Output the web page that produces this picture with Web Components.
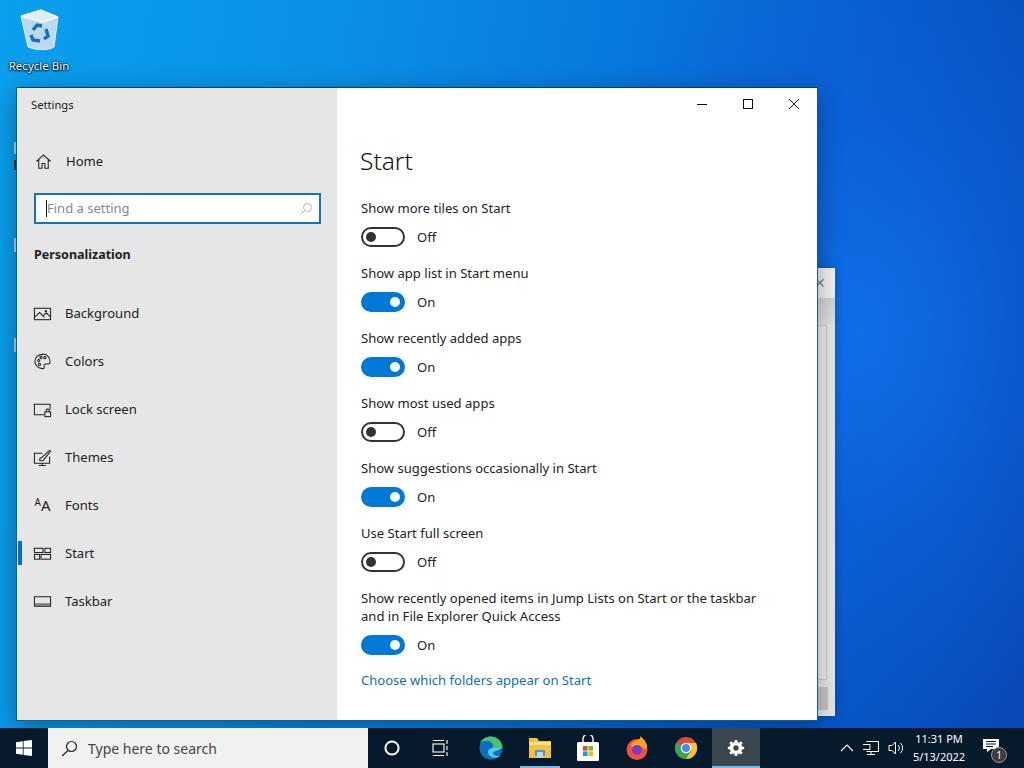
<!DOCTYPE html>
<html>
<head>
<meta charset="utf-8">
<title>Settings - Start</title>
<style>
    html, body { margin: 0; height: 100%; overflow: hidden; }
    body { font-family: "Noto Sans", "Open Sans", sans-serif; }
</style>
</head>
<body>
<x-desktop>
    <x-settings-window>
        <x-nav-item slot="nav" icon="background" label="Background"></x-nav-item>
        <x-nav-item slot="nav" icon="colors" label="Colors"></x-nav-item>
        <x-nav-item slot="nav" icon="lock" label="Lock screen"></x-nav-item>
        <x-nav-item slot="nav" icon="themes" label="Themes"></x-nav-item>
        <x-nav-item slot="nav" icon="fonts" label="Fonts"></x-nav-item>
        <x-nav-item slot="nav" icon="start" label="Start" active></x-nav-item>
        <x-nav-item slot="nav" icon="taskbar" label="Taskbar"></x-nav-item>
        <x-toggle-row label="Show more tiles on Start"></x-toggle-row>
        <x-toggle-row label="Show app list in Start menu" on></x-toggle-row>
        <x-toggle-row label="Show recently added apps" on></x-toggle-row>
        <x-toggle-row label="Show most used apps"></x-toggle-row>
        <x-toggle-row label="Show suggestions occasionally in Start" on></x-toggle-row>
        <x-toggle-row label="Use Start full screen"></x-toggle-row>
        <x-toggle-row label="Show recently opened items in Jump Lists on Start or the taskbar and in File Explorer Quick Access" on></x-toggle-row>
    </x-settings-window>
</x-desktop>
<x-taskbar></x-taskbar>

<script>
{
    const icons = {
        home: '<path d="M2.5 10 10 3l7.5 7M5 8v9h3.5v-5h3v5H15V8"/>',
        background: '<rect x="1.5" y="4.5" width="17" height="12"/><path d="M1.5 14 7 9l5 5M11 12l3-2.500 4.500 4"/><circle cx="13.5" cy="7.5" r=".7"/>',
        colors: '<path d="M10 2.5c-4.600 0-8 3-8 7.200 0 4.400 3.600 7.800 8 7.800 1.700 0 2.200-1 1.700-2.200-.6-1.600.2-2.600 1.800-2.600h2.600c1.200 0 1.900-1 1.900-2.600 0-4.400-3.700-8-8-8Z"/><circle cx="6" cy="9" r="1.2"/><circle cx="8.5" cy="5.8" r="1.2"/><circle cx="12.5" cy="6" r="1.2"/><circle cx="6.8" cy="13" r="1.2"/>',
        lock: '<path d="M12 15.5H1.5v-11h16.500v5.500"/><rect x="12.5" y="12.5" width="6" height="5"/><path d="M13.8 12.5v-1.200a1.700 1.700 0 0 1 3.400 0v1.200"/>',
        themes: '<path d="M10 5.5H1.5v10.500h16v-7M9.500 16v2.500M6 18.500h7.500"/><path d="M7 13c0-2 1-3 2.400-3L17.500 2.500l1 1-6.800 8.400c0 1.400-2 2-4.700 1.100Z"/>',
        start: '<rect x="1.5" y="4.5" width="9" height="4.5"/><rect x="12.5" y="4.5" width="6" height="4.5"/><rect x="1.5" y="11" width="5.5" height="5"/><rect x="8.5" y="11" width="10" height="5"/>',
        taskbar: '<rect x="1.5" y="5" width="17" height="10"/><path d="M2 13.2h16" stroke="#777" stroke-width="2.6"/>'
    };

    window.customElements.define('x-desktop', class extends HTMLElement {
        constructor() {
            super();
            this.attachShadow({ mode: 'open' }).innerHTML = `
                <style>
                    :host {
                        display: block; position: absolute; inset: 0 0 40px 0; overflow: hidden;
                        background:
                            radial-gradient(ellipse 300px 420px at 860px 330px, #0f6fe8 0%, rgba(15,100,225,.55) 50%, rgba(10,80,200,0) 100%),
                            linear-gradient(100deg, #0aa0ee 0%, #0a90e6 30%, #0878de 55%, #0658c8 80%, #0a48b6 100%);
                    }
                    .bin {
                        position: absolute; left: 3px; top: 8px; width: 72px; display: flex; flex-direction: column;
                        align-items: center; color: #fff; font-size: 11.5px; gap: 6px; line-height: 15px;
                        text-shadow: 0 1px 2px #000, 0 0 2px #000, 0 0 1px #000;
                    }
                    .back {
                        position: absolute; left: 780px; top: 268px; width: 55px; height: 448px; box-sizing: border-box;
                        background: #e9e9e9; box-shadow: 0 0 8px rgba(0,0,0,.2);
                        color: #888; font: 14px "Noto Sans", sans-serif;
                    }
                    .back .head { height: 30px; background: #f3f3f3; text-align: right; padding: 0 9px 0 0; line-height: 30px; }
                    .back .inner { position: absolute; left: 0; right: 8px; top: 57px; height: 353px; border: 1px solid #cfcfcf; background: #f0f0f0; }
                    .back .btn { position: absolute; right: 7px; bottom: 6px; width: 40px; height: 23px; background: #c8c8c8; }
                    .back .band { height: 27px; background: linear-gradient(#d4d4d4, #e4e4e4); }
                    .stub { position: absolute; left: 14px; width: 3px; background: #d5e6f2; opacity: .75; }
                </style>
                <div class="bin">
                    <svg width="40" height="44" viewBox="0 0 40 44">
                        <path d="M2 8 22 2l17 7-4 30c-4 3-17 4-26 0Z" fill="#b9d9ec" stroke="#e6f1f8"/>
                        <path d="M2 8 22 2l17 7-14 5Z" fill="#dcedf7" stroke="#fff"/>
                        <path d="M4 9 25 14l14-5" fill="none" stroke="#fff"/>
                        <path d="M14 22l4-5 5 1M27 21l2 7-4 3M21 33l-7-1-2-5" fill="none" stroke="#1c6cc0" stroke-width="3.4"/>
                    </svg>
                    <span>Recycle Bin</span>
                </div>
                <div class="stub" style="top:142px;height:12px"></div>
                <div class="stub" style="top:160px;height:10px;background:#1a3a5a;opacity:1"></div>
                <div class="stub" style="top:238px;height:14px"></div>
                <div class="stub" style="top:338px;height:14px"></div>
                <div class="back"><div class="head">✕</div><div class="band"></div><div class="inner"></div><div class="btn"></div></div>
                <slot></slot>
            `;
        }
    });

    window.customElements.define('x-settings-window', class extends HTMLElement {
        constructor() {
            super();
            const svg = (d, w = 19) => `<svg width="${w}" height="${w}" viewBox="0 0 20 20" fill="none" stroke="#222" stroke-width="1.1">${d}</svg>`;
            this.attachShadow({ mode: 'open' }).innerHTML = `
                <style>
                    :host {
                        position: absolute; left: 16px; top: 87px; width: 802px; height: 634px; box-sizing: border-box;
                        display: grid; grid-template-columns: 320px 1fr; border: 1px solid #0b5f9a;
                        border-top-color: #0a3f70; background: #fff; color: #1a1a1a;
                        box-shadow: 0 6px 24px rgba(0,0,0,.35); font-size: 13.05px;
                    }
                    aside { background: #e6e6e6; display: flex; flex-direction: column; }
                    .title { font-size: 11.2px; padding: 8px 0 0 14px; height: 36px; box-sizing: border-box; line-height: 17px; }
                    .home { display: flex; align-items: center; margin-top: 25px; padding-left: 17px; height: 24px; gap: 13px; }
                    .search {
                        margin: 20px 16px 0 17px; height: 31px; box-sizing: border-box; border: 2px solid #1173bb; background: #fff;
                        display: flex; align-items: center; padding: 0 6px 0 10px; color: #8a8a8a; font-size: 13px; justify-content: space-between;
                    }
                    .search span { border-left: 1px solid #111; line-height: 17px; }
                    h2 { margin: 21px 0 0 17px; font-size: 12.5px; font-weight: 700; color: #222; line-height: 20px; }
                    nav { margin-top: 24px; display: flex; flex-direction: column; }
                    main { position: relative; padding: 56px 20px 0 24px; display: flex; flex-direction: column; }
                    h1 { font-size: 24.5px; font-weight: 300; margin: 0 0 21px -1px; line-height: 34px; color: #111; }
                    .rows { display: flex; flex-direction: column; gap: 17px; }
                    a { color: #0f6cbd; text-decoration: none; margin-top: 15px; line-height: 20px; }
                    .caption { position: absolute; right: 0; top: 0; display: flex; }
                    .caption div { width: 46px; height: 32px; display: flex; align-items: center; justify-content: center; }
                </style>
                <aside>
                    <div class="title">Settings</div>
                    <div class="home">${svg(icons.home)}<span>Home</span></div>
                    <div class="search"><span>Find a setting</span>
                        <svg width="14" height="14" viewBox="0 0 14 14" fill="none" stroke="#b5b5b5"><circle cx="8.5" cy="5.5" r="4"/><path d="M5.5 8.5 1.5 12.5"/></svg>
                    </div>
                    <h2>Personalization</h2>
                    <nav><slot name="nav"></slot></nav>
                </aside>
                <main>
                    <div class="caption">
                        <div><svg width="12" height="12" stroke="#111"><path d="M1 6.5h10"/></svg></div>
                        <div><svg width="12" height="12" fill="none" stroke="#111"><rect x="1.5" y="1.5" width="9" height="9"/></svg></div>
                        <div><svg width="12" height="12" fill="none" stroke="#111"><path d="M1 1l10 10M11 1 1 11"/></svg></div>
                    </div>
                    <h1>Start</h1>
                    <div class="rows"><slot></slot></div>
                    <a>Choose which folders appear on Start</a>
                </main>
            `;
        }
    });

    window.customElements.define('x-nav-item', class extends HTMLElement {
        constructor() {
            super();
            const name = this.getAttribute('icon');
            const glyph = name === 'fonts'
                ? '<span class="aa"><small>A</small>A</span>'
                : `<svg width="19" height="19" viewBox="0 0 20 20" fill="none" stroke="#222" stroke-width="1.1">${icons[name]}</svg>`;
            this.attachShadow({ mode: 'open' }).innerHTML = `
                <style>
                    :host { display: block; height: 48px; font-size: 13.05px; color: #222; }
                    .row { height: 48px; display: flex; align-items: center; padding-left: 16px; gap: 13px; position: relative; }
                    :host([active]) .row::before { content: ""; position: absolute; left: 1px; top: 12px; width: 4px; height: 24px; background: #0f6cbd; }
                    .aa { width: 19px; font-size: 15px; text-align: center; line-height: 1; white-space: nowrap; }
                    .aa small { font-size: 10px; vertical-align: 5px; }
                </style>
                <div class="row">${glyph}<span>${this.getAttribute('label')}</span></div>
            `;
        }
    });

    window.customElements.define('x-toggle-row', class extends HTMLElement {
        constructor() {
            super();
            const on = this.hasAttribute('on');
            this.attachShadow({ mode: 'open' }).innerHTML = `
                <style>
                    :host { display: block; font-size: 13.05px; color: #222; }
                    .label { line-height: 18px; width: 410px; }
                    .line { display: flex; align-items: center; gap: 12px; margin-top: 10px; height: 20px; }
                    .track {
                        width: 44px; height: 20px; box-sizing: border-box; border-radius: 10px; position: relative;
                        border: 2px solid ${on ? '#0078d7' : '#333'}; background: ${on ? '#0078d7' : 'transparent'};
                    }
                    .knob {
                        position: absolute; top: 3px; ${on ? 'right: 3px' : 'left: 3px'}; width: 10px; height: 10px; border-radius: 50%;
                        background: ${on ? '#fff' : '#333'};
                    }
                </style>
                <div class="label">${this.getAttribute('label')}</div>
                <div class="line"><div class="track"><div class="knob"></div></div><span>${on ? 'On' : 'Off'}</span></div>
            `;
        }
    });

    window.customElements.define('x-taskbar', class extends HTMLElement {
        constructor() {
            super();
            this.attachShadow({ mode: 'open' }).innerHTML = `
                <style>
                    :host {
                        position: absolute; left: 0; right: 0; bottom: 0; height: 40px; display: flex; align-items: stretch;
                        background: #071a2c; color: #fff; font-size: 11px;
                    }
                    .start { width: 48px; display: flex; align-items: center; justify-content: center; }
                    .search {
                        width: 320px; background: #f1f1f1; color: #444; display: flex; align-items: center; gap: 10px;
                        padding-left: 13px; box-sizing: border-box; font-size: 14px;
                    }
                    .slot { width: 48px; display: flex; align-items: center; justify-content: center; position: relative; }
                    .slot.run::after { content: ""; position: absolute; left: 4px; right: 4px; bottom: 0; height: 2px; background: #76b9ed; }
                    .slot.active { background: #3a4650; }
                    .slot.active::after { left: 0; right: 0; }
                    .tray { margin-left: auto; display: flex; align-items: center; padding-right: 13px; }
                    .tray svg { display: block; }
                    .clock { text-align: center; line-height: 18px; width: 62px; margin: 0 1px 0 3px; }
                    .notify { width: 40px; height: 40px; position: relative; display: flex; align-items: center; justify-content: center; }
                    .notify svg { margin-top: -5px; }
                    .badge {
                        position: absolute; left: 20px; top: 19px; width: 16px; height: 16px; border-radius: 50%; background: #3c3c3c;
                        border: 1px solid #999; box-sizing: border-box; font-size: 10px; line-height: 14px; text-align: center;
                    }
                </style>
                <div class="start"><svg width="16" height="16" viewBox="0 0 16 16" fill="#fff"><path d="M0 2.2 6.8 1.2v6.400H0ZM7.600 1.100 16 0v7.600H7.600ZM0 8.400h6.800v6.400L0 13.800ZM7.600 8.400H16V16l-8.400-1.100Z"/></svg></div>
                <div class="search">
                    <svg width="17" height="17" viewBox="0 0 17 17" fill="none" stroke="#222" stroke-width="1.2"><circle cx="10.5" cy="6.5" r="5"/><path d="M7 10.5 1 16"/></svg>
                    <span>Type here to search</span>
                </div>
                <div class="slot"><svg width="16" height="16" fill="none" stroke="#fff" stroke-width="2"><circle cx="8" cy="8" r="6.6"/></svg></div>
                <div class="slot"><svg width="18" height="18" viewBox="0 0 18 18" fill="none" stroke="#fff" stroke-width="1.1"><path d="M2 1.5h11M2 16.5h11"/><rect x="2" y="5" width="11" height="8"/><path d="M16 1v4M16 7v4M16 13v4"/></svg></div>
                <div class="slot" style="margin-left:3px"><svg width="24" height="24" viewBox="0 0 24 24"><circle cx="12" cy="12" r="11.5" fill="#0c6fc2"/><path d="M23.5 12C23 5 18 .5 12 .5 7 .5 3 3 1 7c3-2.500 9-3.500 12 0 1.500 1.700 1.500 3.500.5 5h10Z" fill="#4cc46c"/><path d="M14 12c-3 0-5 1.500-5 4 0 3 3 5.500 7 5.500 2 0 3.500-.6 5-1.600-3 .6-7-.5-7-3 0-1.500 4-2 9.500-4.900Z" fill="#56c9ee"/></svg></div>
                <div class="slot run" style="margin-left:1px"><svg width="24" height="22" viewBox="0 0 24 22"><path d="M1 1h8l2 3h12v17H1Z" fill="#f4c13f"/><path d="M1 5h22v3H1Z" fill="#fbe08a"/><path d="M7 13h10v6H7Z" fill="#4a94d0"/><path d="M9 15h6v6H9Z" fill="#c4d8e6"/></svg></div>
                <div class="slot"><svg width="24" height="26" viewBox="0 0 24 26"><path d="M7 7V4a5 5 0 0 1 10 0v3" fill="none" stroke="#eee" stroke-width="1.5"/><rect x="1" y="7" width="22" height="19" rx="1.5" fill="#fff"/><rect x="7" y="11" width="4.6" height="4.6" fill="#e8452c"/><rect x="12.4" y="11" width="4.6" height="4.6" fill="#7dbb2c"/><rect x="7" y="16.4" width="4.6" height="4.6" fill="#11a0ea"/><rect x="12.4" y="16.4" width="4.6" height="4.6" fill="#f9b90e"/></svg></div>
                <div class="slot" style="margin-left:1px"><svg width="24" height="24" viewBox="0 0 24 24"><circle cx="12" cy="13.5" r="10.5" fill="#f0503c"/><path d="M22 9C20 3 16 1 15 0c1 3-2 4-5 5-3 1-5 4-3 7 2-3 8-3 11 0 2 2 5 1 4-3Z" fill="#ffa020"/><circle cx="12" cy="14" r="5" fill="#7a3bc8"/></svg></div>
                <div class="slot" style="margin-left:1px"><svg width="24" height="24" viewBox="0 0 24 24"><circle cx="12" cy="12" r="11" fill="#dd4a3c"/><path d="M12 12 2.500 6.500A11 11 0 0 0 12 23l5-8Z" fill="#3aa655"/><path d="M12 7h10a11 11 0 0 1-10 16l5-8Z" fill="#f7c72c"/><circle cx="12" cy="12" r="5.2" fill="#fff"/><circle cx="12" cy="12" r="4" fill="#4a8ae8"/></svg></div>
                <div class="slot run active" style="margin-left:2px"><svg width="18" height="18" viewBox="0 0 20 20"><path d="M10 3a7 7 0 1 0 0 14 7 7 0 0 0 0-14Zm0 4a3 3 0 1 1 0 6 3 3 0 0 1 0-6Z" fill="#fff" fill-rule="evenodd"/><path d="M10 1v4M10 15v4M1 10h4M15 10h4M3.600 3.600l3 3M13.400 13.400l3 3M16.400 3.600l-3 3M6.600 13.400l-3 3" stroke="#fff" stroke-width="3"/></svg></div>
                <div class="tray">
                    <svg width="14" height="8" viewBox="0 0 14 8" fill="none" stroke="#fff" stroke-width="1.1"><path d="M1 7 7 1l6 6"/></svg>
                    <svg style="margin-left:8px" width="17" height="16" viewBox="0 0 17 16" fill="none" stroke="#fff"><path d="M4.500 1.500h12v10h-12M1 4.500h7v5H1M9 11.500v3M5 14.500h8"/></svg>
                    <svg style="margin-left:9px" width="17" height="16" viewBox="0 0 17 16" fill="none" stroke="#fff"><path d="M1 5.500h3L7.500 2v12L4 10.500H1ZM10 5a4 4 0 0 1 0 6M12.500 3a7 7 0 0 1 0 10"/></svg>
                    <div class="clock"><div>11:31 PM</div><div>5/13/2022</div></div>
                    <div class="notify">
                        <svg width="16" height="13" viewBox="0 0 16 13" fill="#fff"><path d="M0 0h16v10H8l-4 3v-3H0Z"/><path d="M3 2.500h10M3 5h10M3 7.500h7" stroke="#071a2c"/></svg>
                        <div class="badge">1</div>
                    </div>
                </div>
            `;
        }
    });
}
</script>
</body>
</html>
